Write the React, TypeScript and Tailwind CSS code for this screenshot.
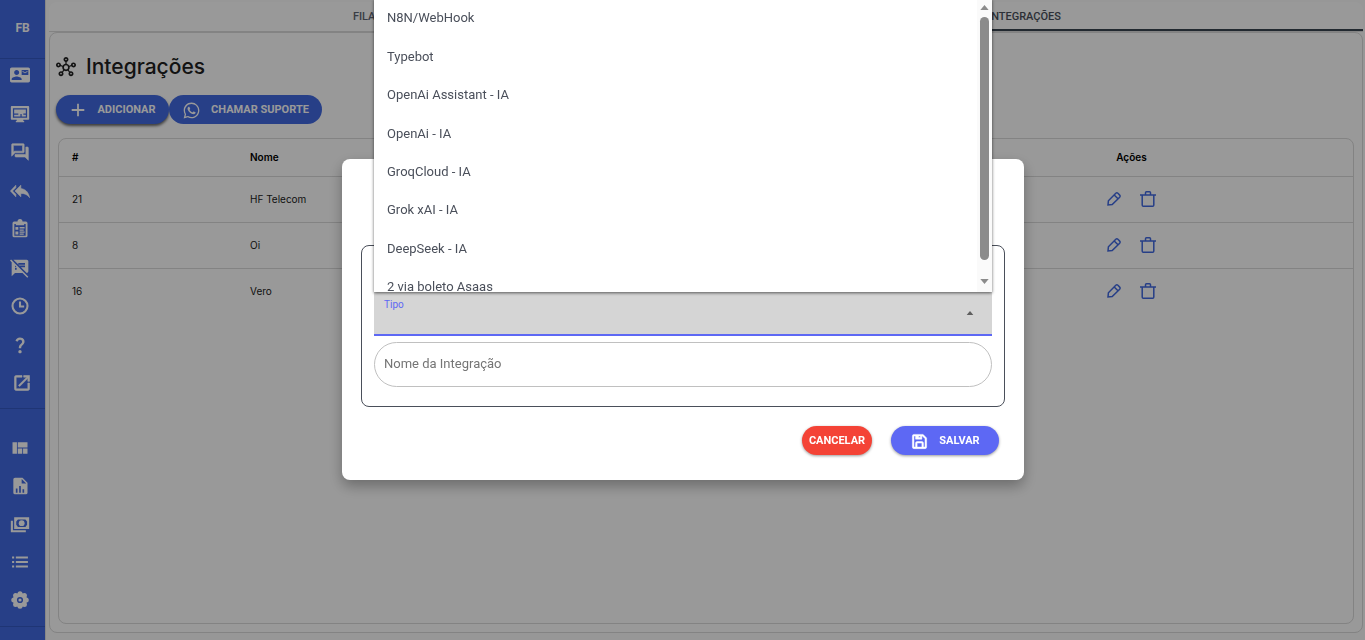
import { useState } from "react";
import type { ReactNode } from "react";
import {
  MdContactMail,
  MdOutlineHub,
  MdQuestionMark,
  MdSpeakerNotesOff,
  MdViewQuilt,
  MdWhatsapp,
} from "react-icons/md";
import { BiSave } from "react-icons/bi";

const Svg = ({ children }: { children: ReactNode }) => (
  <svg viewBox="0 0 24 24" width="20" height="20" fill="currentColor">
    {children}
  </svg>
);

// same as Svg but with a thin outline, for the heavier icons
const BoldSvg = ({ children }: { children: ReactNode }) => (
  <svg viewBox="0 0 24 24" width="20" height="20" fill="currentColor" stroke="currentColor" strokeWidth="0.7">
    {children}
  </svg>
);

const MonitorIcon = () => (
  <Svg>
    <path
      fillRule="evenodd"
      d="M2 2.500h20a1 1 0 0 1 1 1V18a1 1 0 0 1-1 1h-6v1.500h1V22H7v-1.500h1V19H2a1 1 0 0 1-1-1V3.500a1 1 0 0 1 1-1zM3.500 5v11.500h17V5z"
    />
    <path d="M5 6.500h14v5h-3v1.500h3v2h-5v-3h-1.500v3H5v-2h5v-1.500H5z" />
  </Svg>
);

const ChatIcon = () => (
  <BoldSvg>
    <path d="M15 4v7H5.170L4 12.170V4h11m1-2H3c-.55 0-1 .45-1 1v14l4-4h10c.55 0 1-.45 1-1V3c0-.55-.45-1-1-1zm5 4h-2v9H6v2c0 .55.45 1 1 1h11l4 4V7c0-.55-.45-1-1-1z" />
  </BoldSvg>
);

const ReplyIcon = () => (
  <BoldSvg>
    <path d="M7 8V5l-6.500 7L7 19v-3l-4-4 4-4zm6 1V5l-7 7 7 7v-4.100c5 0 8 1.600 10.500 5.100-1-5-3.500-10-10.500-11z" />
  </BoldSvg>
);

const ClipboardIcon = () => (
  <Svg>
    <path
      fillRule="evenodd"
      d="M9 3a3 3 0 0 1 6 0h4a2 2 0 0 1 2 2v15a2 2 0 0 1-2 2H5a2 2 0 0 1-2-2V5a2 2 0 0 1 2-2zM5.200 6v14h13.600V6H17v1.500H7V6z"
    />
    <path d="M6.500 9.500H10V13H6.500zM6.500 15H10v3.500H6.500zM11.500 9.500h6v2h-6zM11.500 12.500h5V14h-5zM11.500 15h6v1.500h-6zM11.500 17.500h5V19h-5z" />
  </Svg>
);

const ClockIcon = () => (
  <svg viewBox="0 0 24 24" width="20" height="20" fill="none" stroke="currentColor" strokeWidth="2.500">
    <circle cx="12" cy="12" r="9" />
    <path d="M12 6.500V12.500h5" />
  </svg>
);

const OpenIcon = () => (
  <BoldSvg>
    <path d="M19 19H5V5h7V3H5a2 2 0 0 0-2 2v14a2 2 0 0 0 2 2h14c1.100 0 2-.9 2-2v-7h-2v7zM14 3v2h3.590l-9.830 9.830 1.410 1.410L19 6.410V10h2V3h-7z" />
  </BoldSvg>
);

const ReportIcon = () => (
  <Svg>
    <path
      fillRule="evenodd"
      d="M6 2h9l6 6v12a2 2 0 0 1-2 2H6a2 2 0 0 1-2-2V4a2 2 0 0 1 2-2zM14 3.500V9h5.500zM7 15v5h2v-5zM11 12v8h2v-8zM15 16v4h2v-4z"
    />
  </Svg>
);

const MoneyIcon = () => (
  <Svg>
    <path
      fillRule="evenodd"
      d="M5 4h18v14H5zM9.500 6.500L7.500 9v4l2 2.500h9l2-2.500V9l-2-2.500z"
    />
    <circle cx="14" cy="11" r="3.500" />
    <path d="M1 8h2.500v11.500H19V22H1z" />
  </Svg>
);

const ListIcon = () => (
  <svg viewBox="0 0 24 24" width="20" height="20" fill="none" stroke="currentColor" strokeWidth="2.400">
    <path d="M2.500 6.500H5M2.500 12H5M2.500 17.500H5M7 6.500h14.500M7 12h14.500M7 17.500h14.500" />
  </svg>
);

const GearIcon = () => (
  <Svg>
    <circle cx="12" cy="12" r="8.500" />
    <circle cx="12" cy="4.500" r="3" />
    <circle cx="17.300" cy="6.700" r="3" />
    <circle cx="19.500" cy="12" r="3" />
    <circle cx="17.300" cy="17.300" r="3" />
    <circle cx="12" cy="19.500" r="3" />
    <circle cx="6.700" cy="17.300" r="3" />
    <circle cx="4.500" cy="12" r="3" />
    <circle cx="6.700" cy="6.700" r="3" />
    <circle cx="12" cy="12" r="2.800" className="stroke-[#4169e1]" strokeWidth="1.800" />
  </Svg>
);

const PencilIcon = () => (
  <svg viewBox="0 0 16 16" width="16" height="16" fill="none" stroke="currentColor" strokeWidth="1.500">
    <path d="M2 14l.4-4.200L9.800 2.300a1.500 1.500 0 0 1 2.100 0l1.800 1.800a1.500 1.500 0 0 1 0 2.100L6.200 13.600zM8.200 4l3.800 3.800" />
  </svg>
);

const TrashIcon = () => (
  <svg viewBox="0 0 16 16" width="16" height="16" fill="none" stroke="currentColor" strokeWidth="1.500">
    <path d="M0 4h16M2.200 4v10a1.300 1.300 0 0 0 1.300 1.300h9a1.300 1.300 0 0 0 1.300-1.300V4M5.500 4V1.800a1 1 0 0 1 1-1h3a1 1 0 0 1 1 1V4" />
  </svg>
);

const Triangle = ({ down, size = 9 }: { down?: boolean; size?: number }) => (
  <svg viewBox="0 0 10 6" width={size} height={size === 9 ? 5 : 4} fill="currentColor">
    <path d={down ? "M0 0h10L5 6z" : "M0 6h10L5 0z"} />
  </svg>
);

const mainMenu = [
  { label: "Contatos", icon: <MdContactMail size={20} /> },
  { label: "Painel", icon: <MonitorIcon /> },
  { label: "Atendimentos", icon: <ChatIcon /> },
  { label: "Respostas rápidas", icon: <ReplyIcon /> },
  { label: "Tarefas", icon: <ClipboardIcon /> },
  { label: "Mensagens", icon: <MdSpeakerNotesOff size={20} /> },
  { label: "Agendamentos", icon: <ClockIcon /> },
  { label: "Ajuda", icon: <MdQuestionMark size={20} /> },
  { label: "Abrir", icon: <OpenIcon /> },
];

const adminMenu = [
  { label: "Kanban", icon: <MdViewQuilt size={20} /> },
  { label: "Relatórios", icon: <ReportIcon /> },
  { label: "Financeiro", icon: <MoneyIcon /> },
  { label: "Listas", icon: <ListIcon /> },
  { label: "Configurações", icon: <GearIcon /> },
];

const integrations = [
  { id: 21, name: "HF Telecom" },
  { id: 8, name: "Oi" },
  { id: 16, name: "Vero" },
];

const types = [
  "N8N/WebHook",
  "Typebot",
  "OpenAi Assistant - IA",
  "OpenAi - IA",
  "GroqCloud - IA",
  "Grok xAI - IA",
  "DeepSeek - IA",
  "2 via boleto Asaas",
];

const Sidebar = () => (
  <aside className="w-[45px] shrink-0 bg-[#4169e1] text-white">
    <div className="h-[59px] border-b border-[#3459c4] flex items-center justify-center pb-0.5">
      <span className="text-xs font-bold">FB</span>
    </div>
    <nav className="h-[350px] flex flex-col justify-between border-b border-[#3459c4] pt-1.5 pb-[15px] pr-[5px]">
      {mainMenu.map((v) => (
        <a
          key={v.label}
          href="#"
          aria-label={v.label}
          className="h-5 flex items-center justify-center last:pl-1">
          {v.icon}
        </a>
      ))}
    </nav>
    <nav className="h-[218px] flex flex-col justify-between border-b border-[#3459c4] pt-[29px] pb-4 pr-[5px]">
      {adminMenu.map((v) => (
        <a key={v.label} href="#" aria-label={v.label} className="h-5 flex items-center justify-center">
          {v.icon}
        </a>
      ))}
    </nav>
  </aside>
);

const IntegrationsTable = () => (
  <div className="flex-1 rounded-lg border border-[#dadada] mt-3.5 ml-0.5">
    <table className="w-full table-fixed text-[10px] text-left">
      <thead>
        <tr className="h-[37px] border-b border-[#dadada] text-black">
          <th className="w-[178px] pl-[13px] font-semibold">#</th>
          <th className="w-[52%] pl-[13px] font-semibold">Nome</th>
          <th className="text-center font-semibold">Ações</th>
        </tr>
      </thead>
      <tbody>
        {integrations.map((v) => (
          <tr key={v.id} className="h-[46px] border-b border-[#dadada] last:border-0 text-[#212121]">
            <td className="pl-[13px]">{v.id}</td>
            <td className="pl-[13px]">{v.name}</td>
            <td>
              <div className="flex items-center justify-center gap-[18px] text-[#4169e1]">
                <button aria-label="Editar">
                  <PencilIcon />
                </button>
                <button aria-label="Excluir">
                  <TrashIcon />
                </button>
              </div>
            </td>
          </tr>
        ))}
      </tbody>
    </table>
  </div>
);

const TypeMenu = ({ onSelect }: { onSelect: (v: string) => void }) => (
  <div className="absolute bottom-full inset-x-0 h-[293px] flex overflow-hidden bg-white shadow-[0_1px_3px_rgba(0,0,0,0.6)] z-10">
    <ul role="listbox" aria-label="Tipo" className="flex-1 h-[307px] flex flex-col">
      {types.map((v) => (
        <li
          key={v}
          role="option"
          aria-selected={false}
          onClick={() => onSelect(v)}
          className="flex-1 flex items-center px-[13px] text-[13px] text-[#4a4f5a] cursor-pointer">
          {v}
        </li>
      ))}
    </ul>
    <div className="w-[15px] bg-[#fafafa] flex flex-col items-center pt-1.5 pb-2 text-[#8b8b8b]">
      <Triangle />
      <div className="w-[9px] h-[243px] mt-[7px] mb-auto rounded-full bg-[#8b8b8b]" />
      <Triangle down />
    </div>
  </div>
);

const IntegrationModal = () => {
  const [type, setType] = useState<string>("");
  const [name, setName] = useState<string>("");
  const [open, setOpen] = useState<boolean>(true);

  return (
    <div className="fixed inset-0 flex items-center justify-center bg-black/40 pl-px pb-px">
      <div
        role="dialog"
        aria-label="Integração"
        className="w-1/2 rounded-lg bg-white pt-[86px] pb-[25px] px-[19px] shadow-[0_6px_14px_rgba(0,0,0,0.3)]">
        <form onSubmit={(e) => e.preventDefault()}>
          <div className="rounded-lg border border-[#4a4f5a] px-3 pt-[46px] pb-[19px]">
            <div className="relative h-11 border-b-2 border-[#5d68f4] bg-[#d5d5d5]">
              <label htmlFor="type" className="block pt-[7px] pl-2.5 text-[10px] leading-3 text-[#5d68f4]">
                Tipo
              </label>
              <select
                id="type"
                value={type}
                onChange={(e) => setType(e.target.value)}
                onFocus={() => setOpen(true)}
                className="block w-full h-[23px] px-2.5 appearance-none bg-transparent text-[13px] outline-none">
                <option value=""></option>
                {types.map((v) => (
                  <option key={v}>{v}</option>
                ))}
              </select>
              <span className="absolute right-[18px] top-[19px] text-[#5f5f5f]">
                <Triangle size={8} />
              </span>
              {open && (
                <TypeMenu
                  onSelect={(v) => {
                    setType(v);
                    setOpen(false);
                  }}
                />
              )}
            </div>
            <input
              type="text"
              aria-label="Nome da Integração"
              placeholder="Nome da Integração"
              value={name}
              onChange={(e) => setName(e.target.value)}
              className="block mt-1.5 h-[45px] w-full rounded-full border border-[#c0c0c0] px-[9px] pb-0.5 text-[13px] outline-none placeholder:text-[#757575]"
            />
          </div>
          <div className="flex justify-end gap-[19px] mt-[19px] pr-1.5 text-[11px] font-bold text-white">
            <button
              type="button"
              className="h-[29px] w-[70px] pt-px rounded-full bg-[#f44336] shadow-[0_1px_3px_rgba(0,0,0,0.4)]">
              CANCELAR
            </button>
            <button
              type="submit"
              className="h-[29px] w-[108px] pt-px flex items-center justify-center gap-2.5 rounded-full bg-[#5d68f4] shadow-[0_1px_3px_rgba(0,0,0,0.4)]">
              <BiSave size={19} strokeWidth={0.6} />
              SALVAR
            </button>
          </div>
        </form>
      </div>
    </div>
  );
};

const App = () => {
  return (
    <div className="flex min-h-screen bg-[#fcfcfc] font-[Roboto,'Liberation_Sans',sans-serif]">
      <Sidebar />
      <main className="flex-1 flex flex-col pt-0.5 pb-[7px] pl-[3px] pr-0.5 border-l border-[#e2e2e2]">
        <div className="h-[30px] flex rounded-t-lg border-b border-[#dadada] bg-white text-[11px] font-medium">
          <button className="flex-1 pt-0.5 pr-5 text-[#5f6673]">FILAS</button>
          <button className="flex-1 pt-1 pr-5 border-b-2 border-[#3a4550] text-[#4a4f5a]">INTEGRAÇÕES</button>
        </div>
        <section className="flex-1 flex flex-col rounded-lg border border-[#dadada] bg-white pt-[19px] pb-2 pl-1.5 pr-2 font-[Inter,sans-serif]">
          <h1 className="flex items-center gap-2.5 h-[30px] text-[21px] font-medium text-[#212121]">
            <MdOutlineHub size={20} />
            Integrações
          </h1>
          <div className="flex mt-[13px] text-[11px] font-bold text-white font-[Roboto,'Liberation_Sans',sans-serif]">
            <button className="h-[29px] w-[113px] pt-px flex items-center justify-center gap-2.5 rounded-full bg-[#4169e1] shadow-[0_2px_3px_rgba(0,0,0,0.6)]">
              <svg viewBox="0 0 20 20" width="18" height="18" stroke="currentColor" strokeWidth="2">
                <path d="M10 3v14M3 10h14" />
              </svg>
              ADICIONAR
            </button>
            <button className="h-[29px] w-[153px] pt-px flex items-center justify-center gap-2.5 rounded-full bg-[#4169e1]">
              <MdWhatsapp size={19} />
              CHAMAR SUPORTE
            </button>
          </div>
          <IntegrationsTable />
        </section>
      </main>
      <IntegrationModal />
    </div>
  );
};

export default App;
